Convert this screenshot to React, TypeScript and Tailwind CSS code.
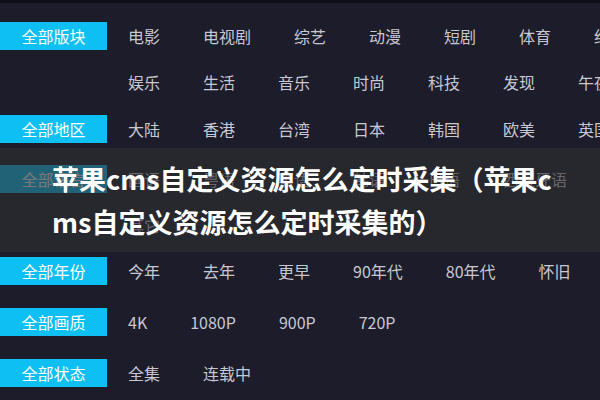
import React from "react";

const font = { fontFamily: '"Noto Sans CJK SC", "Noto Sans", sans-serif' };

type Row = { label?: string; items: string[]; mt: string };

const rows: Row[] = [
  { label: "全部版块", items: ["电影", "电视剧", "综艺", "动漫", "短剧", "体育", "纪录片"], mt: "mt-[19px]" },
  { items: ["娱乐", "生活", "音乐", "时尚", "科技", "发现", "午夜"], mt: "mt-[18px]" },
  { label: "全部地区", items: ["大陆", "香港", "台湾", "日本", "韩国", "欧美", "英国"], mt: "mt-[19px]" },
  { label: "全部语言", items: ["国语", "粤语", "英语", "韩语", "日语", "西班牙语"], mt: "mt-[22px]" },
  { items: ["其它"], mt: "mt-[18px]" },
  { label: "全部年份", items: ["今年", "去年", "更早", "90年代", "80年代", "怀旧"], mt: "mt-[18px]" },
  { label: "全部画质", items: ["4K", "1080P", "900P", "720P"], mt: "mt-[23px]" },
  { label: "全部状态", items: ["全集", "连载中"], mt: "mt-[23px]" },
];

export default function App() {
  return (
    <div
      className="relative w-[600px] h-[400px] overflow-hidden bg-[#1c1c2b]"
      style={font}
    >
      <div className="h-[3px] bg-[#0f0f19]" />
      <div className="flex flex-col">
        {rows.map((r, i) => (
          <div key={i} className={`flex items-center h-[28px] whitespace-nowrap ${r.mt}`}>
            {r.label ? (
              <div className="w-[107px] h-[28px] shrink-0 bg-[#0ebff4] text-white text-[16px] leading-[28px] flex items-center justify-center">
                {r.label}
              </div>
            ) : (
              <div className="w-[107px] h-[28px] shrink-0" />
            )}
            <div className="ml-[21px] flex items-center gap-[43px] text-[16px] leading-[28px] text-[#c8c8d2]">
              {r.items.map((it) => (
                <span key={it} className="shrink-0">
                  {it}
                </span>
              ))}
            </div>
          </div>
        ))}
      </div>
      <div className="absolute left-0 right-0 top-[148px] h-[104px] bg-[rgba(46,46,48,0.64)] flex items-center">
        <div className="pl-[52px] text-white font-bold text-[27px] leading-[43px] whitespace-nowrap">
          苹果cms自定义资源怎么定时采集（苹果c
          <br />
          ms自定义资源怎么定时采集的）
        </div>
      </div>
    </div>
  );
}
